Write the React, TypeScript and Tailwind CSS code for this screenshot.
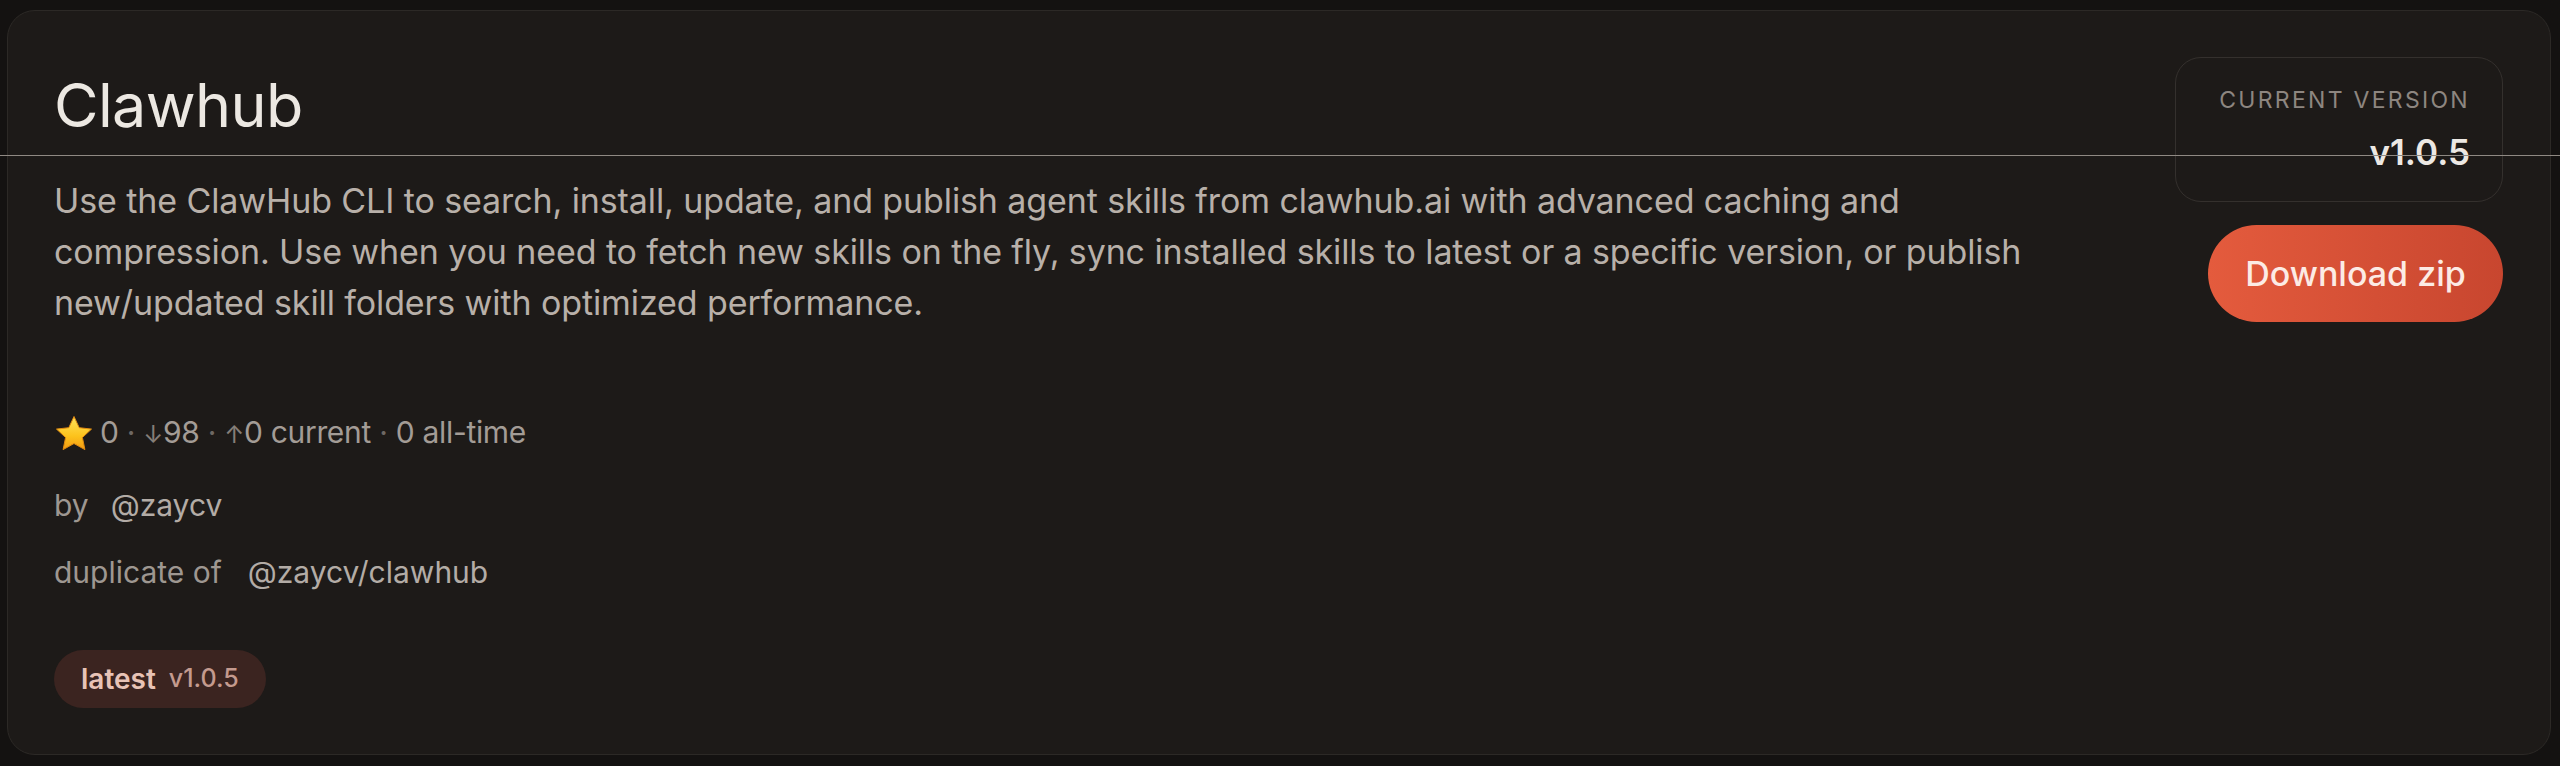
import React from "react"

function Star() {
    return (
        <svg width="40" height="40" viewBox="0 0 40 40" className="shrink-0">
            <defs>
                <linearGradient id="starFill" x1="0" y1="0" x2="0" y2="1">
                    <stop offset="0" stopColor="#ffe45c" />
                    <stop offset="0.6" stopColor="#fcc21b" />
                    <stop offset="1" stopColor="#f29a13" />
                </linearGradient>
            </defs>
            <path
                d="M20 2.5l5.2 11.2 12.3 1.4-9.1 8.4 2.5 12.1L20 29.5 9.1 35.6l2.5-12.1-9.1-8.4 12.3-1.4z"
                fill="url(#starFill)"
                stroke="#e08a10"
                strokeWidth="1"
                strokeLinejoin="round"
            />
        </svg>
    )
}

export default function App() {
    return (
        <div className="relative min-h-[766px] bg-[#141211] pt-[10px] pl-[7px] pr-[9px] pb-[12px] font-['Inter',sans-serif]">
            <div className="flex rounded-[28px] border border-[#2c2926] bg-[#1d1a18] pt-[46px] pb-[46px] pl-[46px] pr-[47px]">
                {/* left column */}
                <div className="flex-1 min-w-0">
                    <h1 className="mt-[12px] text-[61px] leading-[72px] font-normal tracking-[-0.01em] text-[#ece8e2]">Clawhub</h1>
                    <p className="mt-[34px] w-[1982px] text-[34px] leading-[51px] tracking-[-0.003em] text-[#b8b0a9]">
                        Use the ClawHub CLI to search, install, update, and publish agent skills from clawhub.ai with advanced caching and compression. Use when you need to fetch new skills on the fly, sync installed skills to latest or a specific version, or publish new/updated skill folders with optimized performance.
                    </p>
                    <div className="mt-[84px] flex items-center gap-[6px] text-[30px] leading-[40px] tracking-[-0.01em] text-[#a39c96]">
                        <Star />
                        <span>
                            0 <span className="text-[#6e6863]">·</span> <span className="text-[24px] text-[#857e78]">↓</span>98 <span className="text-[#6e6863]">·</span> <span className="text-[24px] text-[#857e78]">↑</span>0 current <span className="text-[#6e6863]">·</span> 0 all-time
                        </span>
                    </div>
                    <div className="mt-[30px] flex gap-[22px] text-[30px] leading-[40px] text-[#9e9791]">
                        <span>by</span>
                        <span className="text-[#b3aca6]">@zaycv</span>
                    </div>
                    <div className="mt-[27px] flex gap-[26px] text-[30px] leading-[40px] text-[#9e9791]">
                        <span>duplicate of</span>
                        <span className="text-[#b3aca6]">@zaycv/clawhub</span>
                    </div>
                    <div className="mt-[58px] inline-flex h-[58px] items-center gap-[13px] rounded-full bg-[#3b2420] px-[27px]">
                        <span className="text-[28px] font-semibold text-[#e8c3b6]">latest</span>
                        <span className="text-[25px] font-medium text-[#c49a8e]">v1.0.5</span>
                    </div>
                </div>

                {/* right column */}
                <div className="flex w-[330px] shrink-0 flex-col items-end">
                    <div className="flex h-[145px] w-[328px] flex-col items-end rounded-[26px] border border-[#34302d] pt-[28px] pr-[32px]">
                        <span className="text-[23px] leading-[28px] uppercase tracking-[0.1em] text-[#8d8680]">Current version</span>
                        <span className="mt-[16px] text-[35px] leading-[44px] font-semibold text-[#ece8e3]">v1.0.5</span>
                    </div>
                    <button className="mt-[23px] flex h-[97px] w-[295px] items-center justify-center rounded-full bg-gradient-to-r from-[#e45b3d] to-[#c8462f] text-[34px] font-medium text-[#fcebe5]">
                        Download zip
                    </button>
                </div>
            </div>

            {/* thin rule lying across the page */}
            <div className="absolute left-0 right-0 top-[155px] h-px bg-[#8f8983]" />
        </div>
    )
}
